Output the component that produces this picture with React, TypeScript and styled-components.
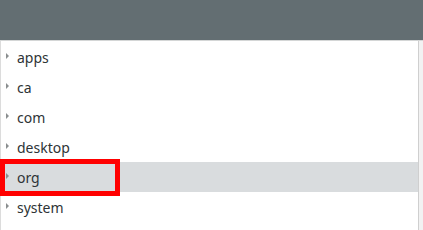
import styled, { createGlobalStyle } from 'styled-components'

const GlobalStyle = createGlobalStyle`
  html, body {
    margin: 0;
    padding: 0;
    background: #ffffff;
  }
  body {
    font-family: "Noto Sans", "DejaVu Sans", sans-serif;
  }
`

const folders = ['apps', 'ca', 'com', 'desktop', 'org', 'system']
const selected = 'org'

export default function App() {
  return (
    <>
      <GlobalStyle />
      <Window>
        <Header />
        <Body>
          <List>
            {folders.map((name) => (
              <Row key={name} active={name === selected}>
                <Arrow />
                <Label>{name}</Label>
                {name === selected && <Marker />}
              </Row>
            ))}
          </List>
          <Scroll />
        </Body>
      </Window>
    </>
  )
}

const Window = styled.div`
  width: 423px;
  height: 230px;
  display: flex;
  flex-direction: column;
  overflow: hidden;
`

const Header = styled.div`
  height: 40px;
  flex: 0 0 40px;
  background: #636e72;
  border-bottom: 1px solid #d4d6d6;
`

const Body = styled.div`
  flex: 1;
  display: flex;
`

const List = styled.div`
  flex: 1;
  border-left: 1px solid #dcdcdc;
  padding-top: 1px;
`

const Row = styled.div<{ active?: boolean }>`
  position: relative;
  height: 30px;
  display: flex;
  align-items: center;
  background: ${(p) => (p.active ? '#d9dcde' : 'transparent')};
`

const Arrow = styled.span`
  width: 0;
  height: 0;
  margin-left: 5px;
  margin-right: 8px;
  margin-top: -3px;
  border-top: 3px solid transparent;
  border-bottom: 3px solid transparent;
  border-left: 3px solid #8a8e8f;
`

const Label = styled.span`
  font-size: 14px;
  color: #2e3436;
  margin-top: 0;
`

const Marker = styled.div`
  position: absolute;
  left: -1px;
  top: -3px;
  width: 120px;
  height: 37px;
  box-sizing: border-box;
  border: 5px solid #ff0000;
`

const Scroll = styled.div`
  width: 4px;
  border-left: 1px solid #cfcfcf;
  background: #f2f2f2;
`
